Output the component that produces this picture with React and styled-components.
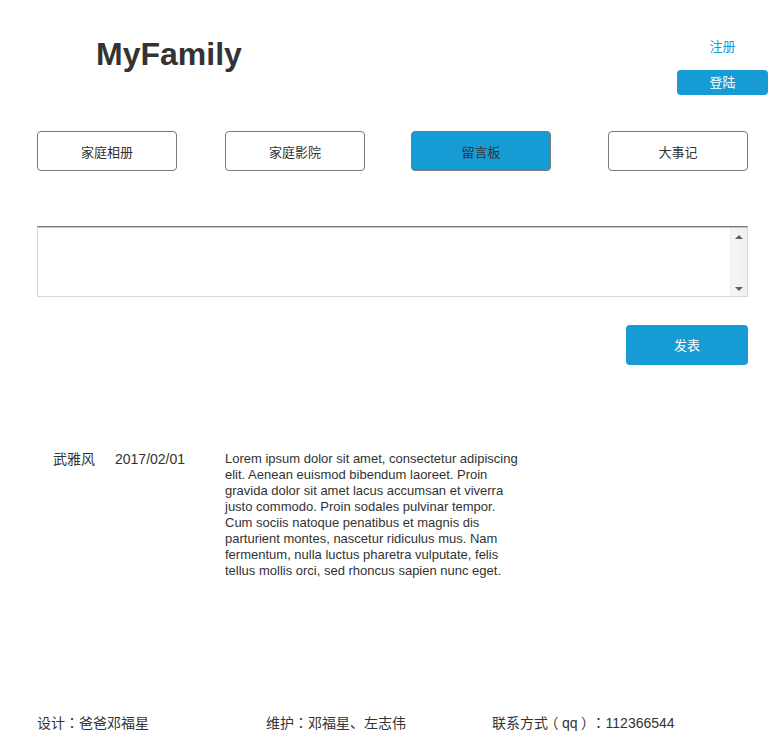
import React, { useState } from "react";
import styled, { createGlobalStyle } from "styled-components";

const GlobalStyle = createGlobalStyle`
  body {
    margin: 0;
    background: #fff;
    font-family: "Liberation Sans", Arial, "Noto Sans CJK SC", sans-serif;
    color: #333;
    text-spacing-trim: space-all;
  }
`;

const Page = styled.div`
  width: 778px;
  min-height: 756px;
`;

const Header = styled.header`
  display: flex;
  justify-content: space-between;
  align-items: flex-start;
  padding: 0 10px 0 96px;
`;

const Logo = styled.h1`
  margin: 36px 0 0;
  font-size: 32px;
  line-height: 37px;
  font-weight: 700;
  color: #333;
`;

const Account = styled.div`
  display: flex;
  flex-direction: column;
  align-items: center;
  width: 91px;
  padding-top: 38px;
`;

const RegisterLink = styled.a`
  font-size: 13px;
  line-height: 17px;
  color: #169bd5;
  text-decoration: none;
  cursor: pointer;
`;

const BlueButton = styled.button`
  border: none;
  border-radius: 4px;
  background: #169bd5;
  color: #fff;
  font-family: inherit;
  font-size: 13px;
  line-height: 1;
  width: ${({ $w }) => $w}px;
  height: ${({ $h }) => $h}px;
  margin-top: ${({ $mt }) => $mt || 0}px;
  cursor: pointer;
  padding: 0;
`;

const Content = styled.main`
  padding: 0 30px 0 37px;
`;

const Nav = styled.nav`
  display: flex;
  margin-top: 36px;
`;

const NavButton = styled.button`
  width: 140px;
  height: 40px;
  margin-left: ${({ $offset }) => $offset}px;
  border: 1px solid #797979;
  border-radius: 4px;
  background: ${({ $active }) => ($active ? "#169bd5" : "#fff")};
  color: #333;
  font-family: inherit;
  font-size: 13px;
  cursor: pointer;
  padding: 0;
`;

const Editor = styled.div`
  display: flex;
  height: 69px;
  margin-top: 55px;
  border: 1px solid #d7d7d7;
  border-top: 1px solid #797979;
  box-shadow: inset 0 1px 0 #c4c4c4;
`;

const TextArea = styled.textarea`
  flex: 1;
  border: none;
  outline: none;
  resize: none;
  overflow: hidden;
  font-family: inherit;
  font-size: 13px;
  padding: 4px;
  background: transparent;
`;

const Scrollbar = styled.div`
  width: 16px;
  display: flex;
  flex-direction: column;
  justify-content: space-between;
  align-items: center;
  padding: 7px 0 5px;
  margin-top: 1px;
  border-left: 1px solid #ededed;
  background: linear-gradient(90deg, #f6f6f6, #f0f0f0);
`;

const Arrow = styled.span`
  width: 0;
  height: 0;
  border-left: 4px solid transparent;
  border-right: 4px solid transparent;
  ${({ $down }) =>
    $down ? "border-top: 4px solid #606060;" : "border-bottom: 4px solid #606060;"}
`;

const Actions = styled.div`
  display: flex;
  justify-content: flex-end;
  margin-top: 28px;
`;

const Message = styled.div`
  display: grid;
  grid-template-columns: 62px 110px 300px;
  align-items: start;
  padding-left: 16px;
  margin-top: 86px;
  font-size: 13px;
  line-height: 16px;
  color: #333;
`;

const Meta = styled.span`
  font-size: 14px;
  line-height: 16px;
`;

const Body = styled.p`
  margin: 0;
`;

const Footer = styled.footer`
  display: flex;
  margin-top: 135px;
  font-size: 14px;
  line-height: 16px;
  color: #333;
`;

const FooterItem = styled.span`
  width: ${({ $w }) => ($w ? `${$w}px` : "auto")};
`;

// full-width punctuation drawn centred in its box, as in the original page
const Punct = styled.span`
  font-family: "Noto Sans CJK JP", sans-serif;
`;

const Paren = styled.span`
  font-feature-settings: "halt";
  padding: 0 3.5px;
`;

const tabs = [
  { label: "家庭相册", offset: 0 },
  { label: "家庭影院", offset: 48 },
  { label: "留言板", offset: 46 },
  { label: "大事记", offset: 57 },
];

const lines = [
  "Lorem ipsum dolor sit amet, consectetur adipiscing",
  "elit. Aenean euismod bibendum laoreet. Proin",
  "gravida dolor sit amet lacus accumsan et viverra",
  "justo commodo. Proin sodales pulvinar tempor.",
  "Cum sociis natoque penatibus et magnis dis",
  "parturient montes, nascetur ridiculus mus. Nam",
  "fermentum, nulla luctus pharetra vulputate, felis",
  "tellus mollis orci, sed rhoncus sapien nunc eget.",
];

export default function App() {
  const [active, setActive] = useState("留言板");
  const [text, setText] = useState("");

  return (
    <Page>
      <GlobalStyle />
      <Header>
        <Logo>MyFamily</Logo>
        <Account>
          <RegisterLink>注册</RegisterLink>
          <BlueButton $w={91} $h={25} $mt={15}>
            登陆
          </BlueButton>
        </Account>
      </Header>

      <Content>
        <Nav>
          {tabs.map((t) => (
            <NavButton
              key={t.label}
              $offset={t.offset}
              $active={active === t.label}
              onClick={() => setActive(t.label)}
            >
              {t.label}
            </NavButton>
          ))}
        </Nav>

        <Editor>
          <TextArea value={text} onChange={(e) => setText(e.target.value)} />
          <Scrollbar>
            <Arrow />
            <Arrow $down />
          </Scrollbar>
        </Editor>

        <Actions>
          <BlueButton $w={122} $h={40}>
            发表
          </BlueButton>
        </Actions>

        <Message>
          <Meta>武雅风</Meta>
          <Meta>2017/02/01</Meta>
          <Body>
            {lines.map((l, i) => (
              <React.Fragment key={i}>
                {l}
                {i < lines.length - 1 && <br />}
              </React.Fragment>
            ))}
          </Body>
        </Message>

        <Footer>
          <FooterItem $w={229}>
            设计<Punct>：</Punct>爸爸邓福星
          </FooterItem>
          <FooterItem $w={226}>
            维护<Punct>：</Punct>邓福星、左志伟
          </FooterItem>
          <FooterItem>
            联系方式<Paren>（</Paren>qq<Paren>）</Paren>
            <Punct>：</Punct>112366544
          </FooterItem>
        </Footer>
      </Content>
    </Page>
  );
}
